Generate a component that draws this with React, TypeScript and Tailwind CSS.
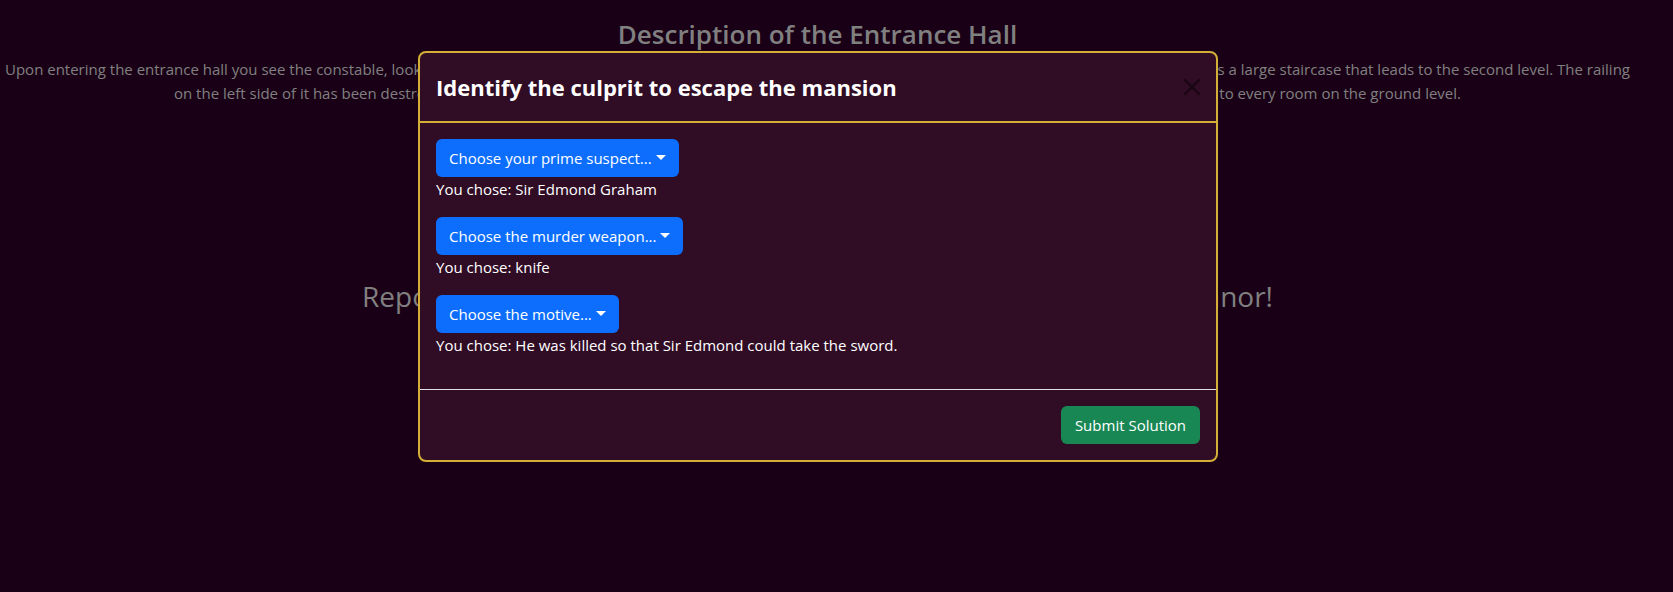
type Choice = { label: string; answer: string };

const choices: Choice[] = [
  { label: "Choose your prime suspect...", answer: "Sir Edmond Graham" },
  { label: "Choose the murder weapon...", answer: "knife" },
  {
    label: "Choose the motive...",
    answer: "He was killed so that Sir Edmond could take the sword.",
  },
];

function ChoiceField({ label, answer }: Choice) {
  return (
    <div className="mb-4">
      <button
        type="button"
        aria-haspopup="menu"
        className="flex h-[38px] items-center gap-1 rounded-md bg-[#0d6efd] px-[13px]"
      >
        {label}
        <svg width="10" height="5" viewBox="0 0 10 5" className="mb-0.5" aria-hidden="true">
          <path d="M0 0h10L5 5z" fill="currentColor" />
        </svg>
      </button>
      <p>You chose: {answer}</p>
    </div>
  );
}

function SolutionDialog() {
  return (
    <section
      role="dialog"
      aria-labelledby="dialog-title"
      className="w-full max-w-[800px] rounded-lg border-2 border-[#d4af37] bg-[#300c25] text-white"
    >
      <header className="flex items-center justify-between border-b-2 border-[#d4af37] p-4">
        <h2 id="dialog-title" className="text-[22px] leading-9 font-bold">
          Identify the culprit to escape the mansion
        </h2>
        <button type="button" aria-label="Close" className="text-black opacity-50">
          <svg width="16" height="16" viewBox="0 0 16 16" fill="currentColor" aria-hidden="true">
            <path d="M.293.293a1 1 0 0 1 1.414 0L8 6.586 14.293.293a1 1 0 1 1 1.414 1.414L9.414 8l6.293 6.293a1 1 0 0 1-1.414 1.414L8 9.414l-6.293 6.293a1 1 0 0 1-1.414-1.414L6.586 8 .293 1.707a1 1 0 0 1 0-1.414z" />
          </svg>
        </button>
      </header>
      <div className="p-4">
        {choices.map((choice) => (
          <ChoiceField key={choice.label} {...choice} />
        ))}
      </div>
      <footer className="flex justify-end border-t border-[#dee2e6] p-4">
        <button type="button" className="h-[38px] rounded-md bg-[#198754] px-3.5">
          Submit Solution
        </button>
      </footer>
    </section>
  );
}

export default function App() {
  return (
    <div className="relative min-h-screen bg-[#1a0016] pr-[38px] font-['Open_Sans',sans-serif] text-[15px] leading-6">
      <main className="text-[#808080]">
        <h1 className="pt-4 text-center text-[26px] leading-9 font-semibold">
          Description of the Entrance Hall
        </h1>
        <div className="mt-[5px]">
          <p className="mx-[5px] flex justify-between">
            <span>Upon entering the entrance hall you see the constable, looking</span>
            <span>is a large staircase that leads to the second level. The railing</span>
          </p>
          <p className="mx-auto flex max-w-[1287px] justify-between">
            <span>on the left side of it has been destroyed</span>
            <span>to every room on the ground level.</span>
          </p>
        </div>
        <h2 className="mx-auto mt-[173px] flex max-w-[911px] justify-between text-[28px] leading-9">
          <span>Report</span>
          <span>Manor!</span>
        </h2>
      </main>
      <div className="absolute inset-0 flex items-start justify-center pt-[51px] pr-[37px]">
        <SolutionDialog />
      </div>
    </div>
  );
}
